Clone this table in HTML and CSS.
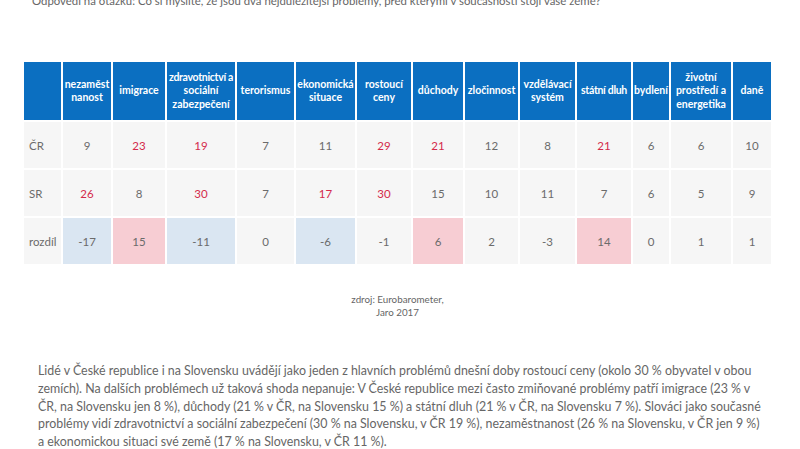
FILE: index.html
```html
<!DOCTYPE html>
<html lang="cs">
<head>
<meta charset="utf-8">
<link rel="stylesheet" href="styles.css">
</head>
<body>
<div class="page">
  <p class="question">Odpovědi na otázku: Co si myslíte, že jsou dvá nejdůležitější problémy, před kterými v současnosti stojí vaše země?</p>
  <div class="table-wrap">
    <table class="data">
      <colgroup>
        <col class="c37"><col class="c48"><col class="c52"><col class="c68"><col class="c57"><col class="c59"><col class="c54"><col class="c50"><col class="c53"><col class="c55"><col class="c54"><col class="c36"><col class="c60"><col class="c38">
      </colgroup>
      <thead>
        <tr>
          <th></th>
          <th>nezaměst nanost</th>
          <th>imigrace</th>
          <th><span class="nw">zdravotnictví a</span><br>sociální<br>zabezpečení</th>
          <th>terorismus</th>
          <th>ekonomická situace</th>
          <th>rostoucí ceny</th>
          <th>důchody</th>
          <th>zločinnost</th>
          <th>vzdělávací systém</th>
          <th><span class="nw">státní dluh</span></th>
          <th>bydlení</th>
          <th>životní<br>prostředí a<br>energetika</th>
          <th>daně</th>
        </tr>
      </thead>
      <tbody>
        <tr>
          <td class="label">ČR</td>
          <td>9</td><td class="red">23</td><td class="red">19</td><td>7</td><td>11</td><td class="red">29</td><td class="red">21</td><td>12</td><td>8</td><td class="red">21</td><td>6</td><td>6</td><td>10</td>
        </tr>
        <tr>
          <td class="label">SR</td>
          <td class="red">26</td><td>8</td><td class="red">30</td><td>7</td><td class="red">17</td><td class="red">30</td><td>15</td><td>10</td><td>11</td><td>7</td><td>6</td><td>5</td><td>9</td>
        </tr>
        <tr>
          <td class="label">rozdíl</td>
          <td class="blue">-17</td><td class="pink">15</td><td class="blue">-11</td><td>0</td><td class="blue">-6</td><td>-1</td><td class="pink">6</td><td>2</td><td>-3</td><td class="pink">14</td><td>0</td><td>1</td><td>1</td>
        </tr>
      </tbody>
    </table>
    <p class="source">zdroj: Eurobarometer,<br>Jaro 2017</p>
  </div>
  <p class="text">Lidé v České republice i na Slovensku uvádějí jako jeden z hlavních problémů dnešní doby rostoucí ceny (okolo 30 % obyvatel v obou<br>zemích). Na dalších problémech už taková shoda nepanuje: V České republice mezi často zmiňované problémy patří imigrace (23 % v<br>ČR, na Slovensku jen 8 %), důchody (21 % v ČR, na Slovensku 15 %) a státní dluh (21 % v ČR, na Slovensku 7 %). Slováci jako současné<br>problémy vidí zdravotnictví a sociální zabezpečení (30 % na Slovensku, v ČR 19 %), nezaměstnanost (26 % na Slovensku, v ČR jen 9 %)<br>a ekonomickou situaci své země (17 % na Slovensku, v ČR 11 %).</p>
</div>
</body>
</html>
```

FILE: styles.css
```css
html, body {
  margin: 0;
  padding: 0;
  background: #ffffff;
  overflow: hidden;
}
body {
  font-family: Lato, "Open Sans", "Liberation Sans", sans-serif;
  color: #666666;
}
.page {
  width: 800px;
  height: 449px;
  overflow: hidden;
}
.question {
  margin: -8px 0 0 32px;
  font-size: 11.4px;
  line-height: 17px;
  white-space: nowrap;
  color: #666666;
}
.table-wrap {
  width: 751px;
  margin: 51px 0 0 22px;
}
.data {
  table-layout: fixed;
  width: 751px;
  border-collapse: separate;
  border-spacing: 2px;
  background: #ffffff;
}
.c37 { width: 37px; }
.c48 { width: 48px; }
.c52 { width: 52px; }
.c68 { width: 68px; }
.c57 { width: 57px; }
.c59 { width: 59px; }
.c54 { width: 54px; }
.c50 { width: 50px; }
.c53 { width: 53px; }
.c55 { width: 55px; }
.c36 { width: 36px; }
.c60 { width: 60px; }
.c38 { width: 38px; }
.data th {
  height: 58px;
  padding: 0;
  background: #0b6fc1;
  color: #ffffff;
  font-size: 10.5px;
  font-weight: 700;
  line-height: 13.5px;
  text-align: center;
  vertical-align: middle;
}
.nw {
  white-space: nowrap;
  letter-spacing: -0.3px;
}
.data td {
  height: 46px;
  padding: 0;
  background: #f6f6f6;
  font-size: 11.5px;
  text-align: center;
  vertical-align: middle;
  color: #6b6b6b;
}
.data td.label {
  text-align: left;
  padding-left: 5px;
}
.data td.red {
  color: #d42a4b;
}
.data td.blue {
  background: #dae6f2;
}
.data td.pink {
  background: #f7cdd3;
}
.source {
  margin: 27px 0 0 0;
  text-align: center;
  font-size: 9.8px;
  line-height: 13px;
  color: #666666;
}
.text {
  margin: 43px 0 0 38px;
  width: 760px;
  white-space: nowrap;
  font-size: 12.4px;
  line-height: 17.8px;
  color: #666666;
}
```
